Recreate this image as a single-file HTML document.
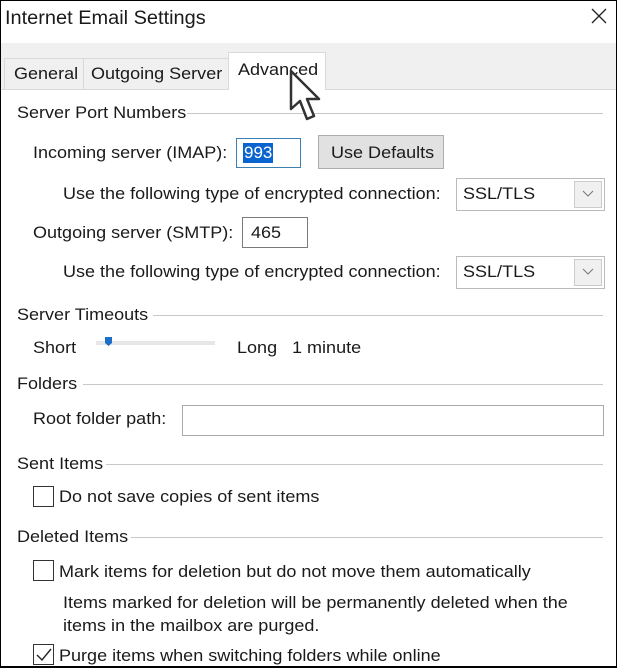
<!DOCTYPE html>
<html><head><style>
*{margin:0;padding:0;box-sizing:border-box}
body{width:617px;height:668px;background:#000;overflow:hidden;font-family:"Liberation Sans",sans-serif;color:#1a1a1a}
#w{position:absolute;left:1px;top:1px;width:615px;height:665px;background:#fff;overflow:hidden}
.a{position:absolute;white-space:nowrap;font-size:17px;line-height:20px;transform:scaleX(1.06);transform-origin:0 50%}
.ln{position:absolute;height:1px;background:#c8c8c8}
.bx{position:absolute;border:1px solid #7a7a7a;background:#fff}
.cb{position:absolute;width:21px;height:21px;border:1px solid #333;background:#fff}
</style></head><body><div id="w">
<div class="a" style="left:4px;top:6px;font-size:19px;line-height:24px;transform:scaleX(1.05)">Internet Email Settings</div>
<svg style="position:absolute;left:590px;top:7px" width="16" height="16"><path d="M1 1L15 15M15 1L1 15" stroke="#222" stroke-width="1.3"/></svg>
<div style="position:absolute;left:0;top:42px;width:615px;height:46px;background:#f0f0f0"></div>
<div style="position:absolute;left:3px;top:57px;width:80px;height:31px;border:1px solid #d9d9d9;border-bottom:none;background:#f0f0f0"></div>
<div style="position:absolute;left:82px;top:57px;width:146px;height:31px;border:1px solid #d9d9d9;border-bottom:none;background:#f0f0f0"></div>
<div style="position:absolute;left:227px;top:51px;width:98px;height:38px;border:1px solid #d9d9d9;border-bottom:none;background:#fff"></div>
<div style="position:absolute;left:0;top:88px;width:615px;height:1px;background:#d9d9d9"></div>
<div style="position:absolute;left:228px;top:88px;width:96px;height:1px;background:#fff"></div>
<div class="a" style="left:13px;top:63px">General</div>
<div class="a" style="left:90px;top:63px">Outgoing Server</div>
<div class="a" style="left:237px;top:59px">Advanced</div>

<div class="a" style="left:16px;top:102px">Server Port Numbers</div><div class="ln" style="left:186px;top:112px;width:416px"></div>
<div class="a" style="left:32px;top:142px">Incoming server (IMAP):</div>
<div class="bx" style="left:235px;top:137px;width:65px;height:30px;border-color:#3c7fb1"><span style="position:absolute;left:6px;top:4px;background:#0a64d0;color:#fff;font-size:17px;line-height:20px;padding:0 1px">993</span></div>
<div style="position:absolute;left:317px;top:134px;width:126px;height:34px;background:#e1e1e1;border:1px solid #adadad"></div>
<div class="a" style="left:330px;top:142px">Use Defaults</div>
<div class="a" style="left:62px;top:183px">Use the following type of encrypted connection:</div>
<div class="bx" style="left:455px;top:177px;width:149px;height:33px;border-color:#bbb"><div style="position:absolute;right:2px;top:2px;width:28px;height:27px;background:#f0f0f0;border:1px solid #ccc"></div><svg style="position:absolute;right:10px;top:11px" width="12" height="8"><path d="M1 1L6 6L11 1" fill="none" stroke="#777"/></svg></div>
<div class="a" style="left:462px;top:183px">SSL/TLS</div>
<div class="a" style="left:32px;top:222px">Outgoing server (SMTP):</div>
<div class="bx" style="left:241px;top:216px;width:66px;height:31px"></div>
<div class="a" style="left:250px;top:222px">465</div>
<div class="a" style="left:62px;top:261px">Use the following type of encrypted connection:</div>
<div class="bx" style="left:455px;top:255px;width:149px;height:33px;border-color:#bbb"><div style="position:absolute;right:2px;top:2px;width:28px;height:27px;background:#f0f0f0;border:1px solid #ccc"></div><svg style="position:absolute;right:10px;top:11px" width="12" height="8"><path d="M1 1L6 6L11 1" fill="none" stroke="#777"/></svg></div>
<div class="a" style="left:462px;top:261px">SSL/TLS</div>

<div class="a" style="left:16px;top:304px">Server Timeouts</div><div class="ln" style="left:152px;top:314px;width:450px"></div>
<div class="a" style="left:32px;top:337px">Short</div>
<div style="position:absolute;left:95px;top:340px;width:119px;height:4px;background:#e7e7e7"></div>
<svg style="position:absolute;left:104px;top:336px" width="8" height="10"><path d="M0 0H7V6L3.5 9L0 6Z" fill="#1c6fc7"/></svg>
<div class="a" style="left:236px;top:337px">Long</div>
<div class="a" style="left:291px;top:337px">1 minute</div>

<div class="a" style="left:16px;top:373px">Folders</div><div class="ln" style="left:82px;top:383px;width:520px"></div>
<div class="a" style="left:32px;top:408px">Root folder path:</div>
<div class="bx" style="left:181px;top:404px;width:422px;height:31px;border-color:#aaa"></div>

<div class="a" style="left:16px;top:453px">Sent Items</div><div class="ln" style="left:105px;top:463px;width:497px"></div>
<div class="cb" style="left:32px;top:485px"></div>
<div class="a" style="left:58px;top:486px">Do not save copies of sent items</div>

<div class="a" style="left:16px;top:526px">Deleted Items</div><div class="ln" style="left:130px;top:536px;width:472px"></div>
<div class="cb" style="left:32px;top:559px"></div>
<div class="a" style="left:58px;top:561px">Mark items for deletion but do not move them automatically</div>
<div class="a" style="left:62px;top:592px">Items marked for deletion will be permanently deleted when the</div>
<div class="a" style="left:62px;top:615px">items in the mailbox are purged.</div>
<div class="cb" style="left:32px;top:643px"><svg style="position:absolute;left:2px;top:3px" width="16" height="14"><path d="M1 7L6 12L15 1" fill="none" stroke="#222" stroke-width="1.4"/></svg></div>
<div class="a" style="left:58px;top:645px">Purge items when switching folders while online</div>

<svg style="position:absolute;left:288px;top:68px" width="36" height="56"><path d="M2 2L2 40L11 32L18 50L25 47L18 30L30 30Z" fill="#fff" stroke="#333" stroke-width="2.5" stroke-linejoin="round"/></svg>
</div></body></html>
